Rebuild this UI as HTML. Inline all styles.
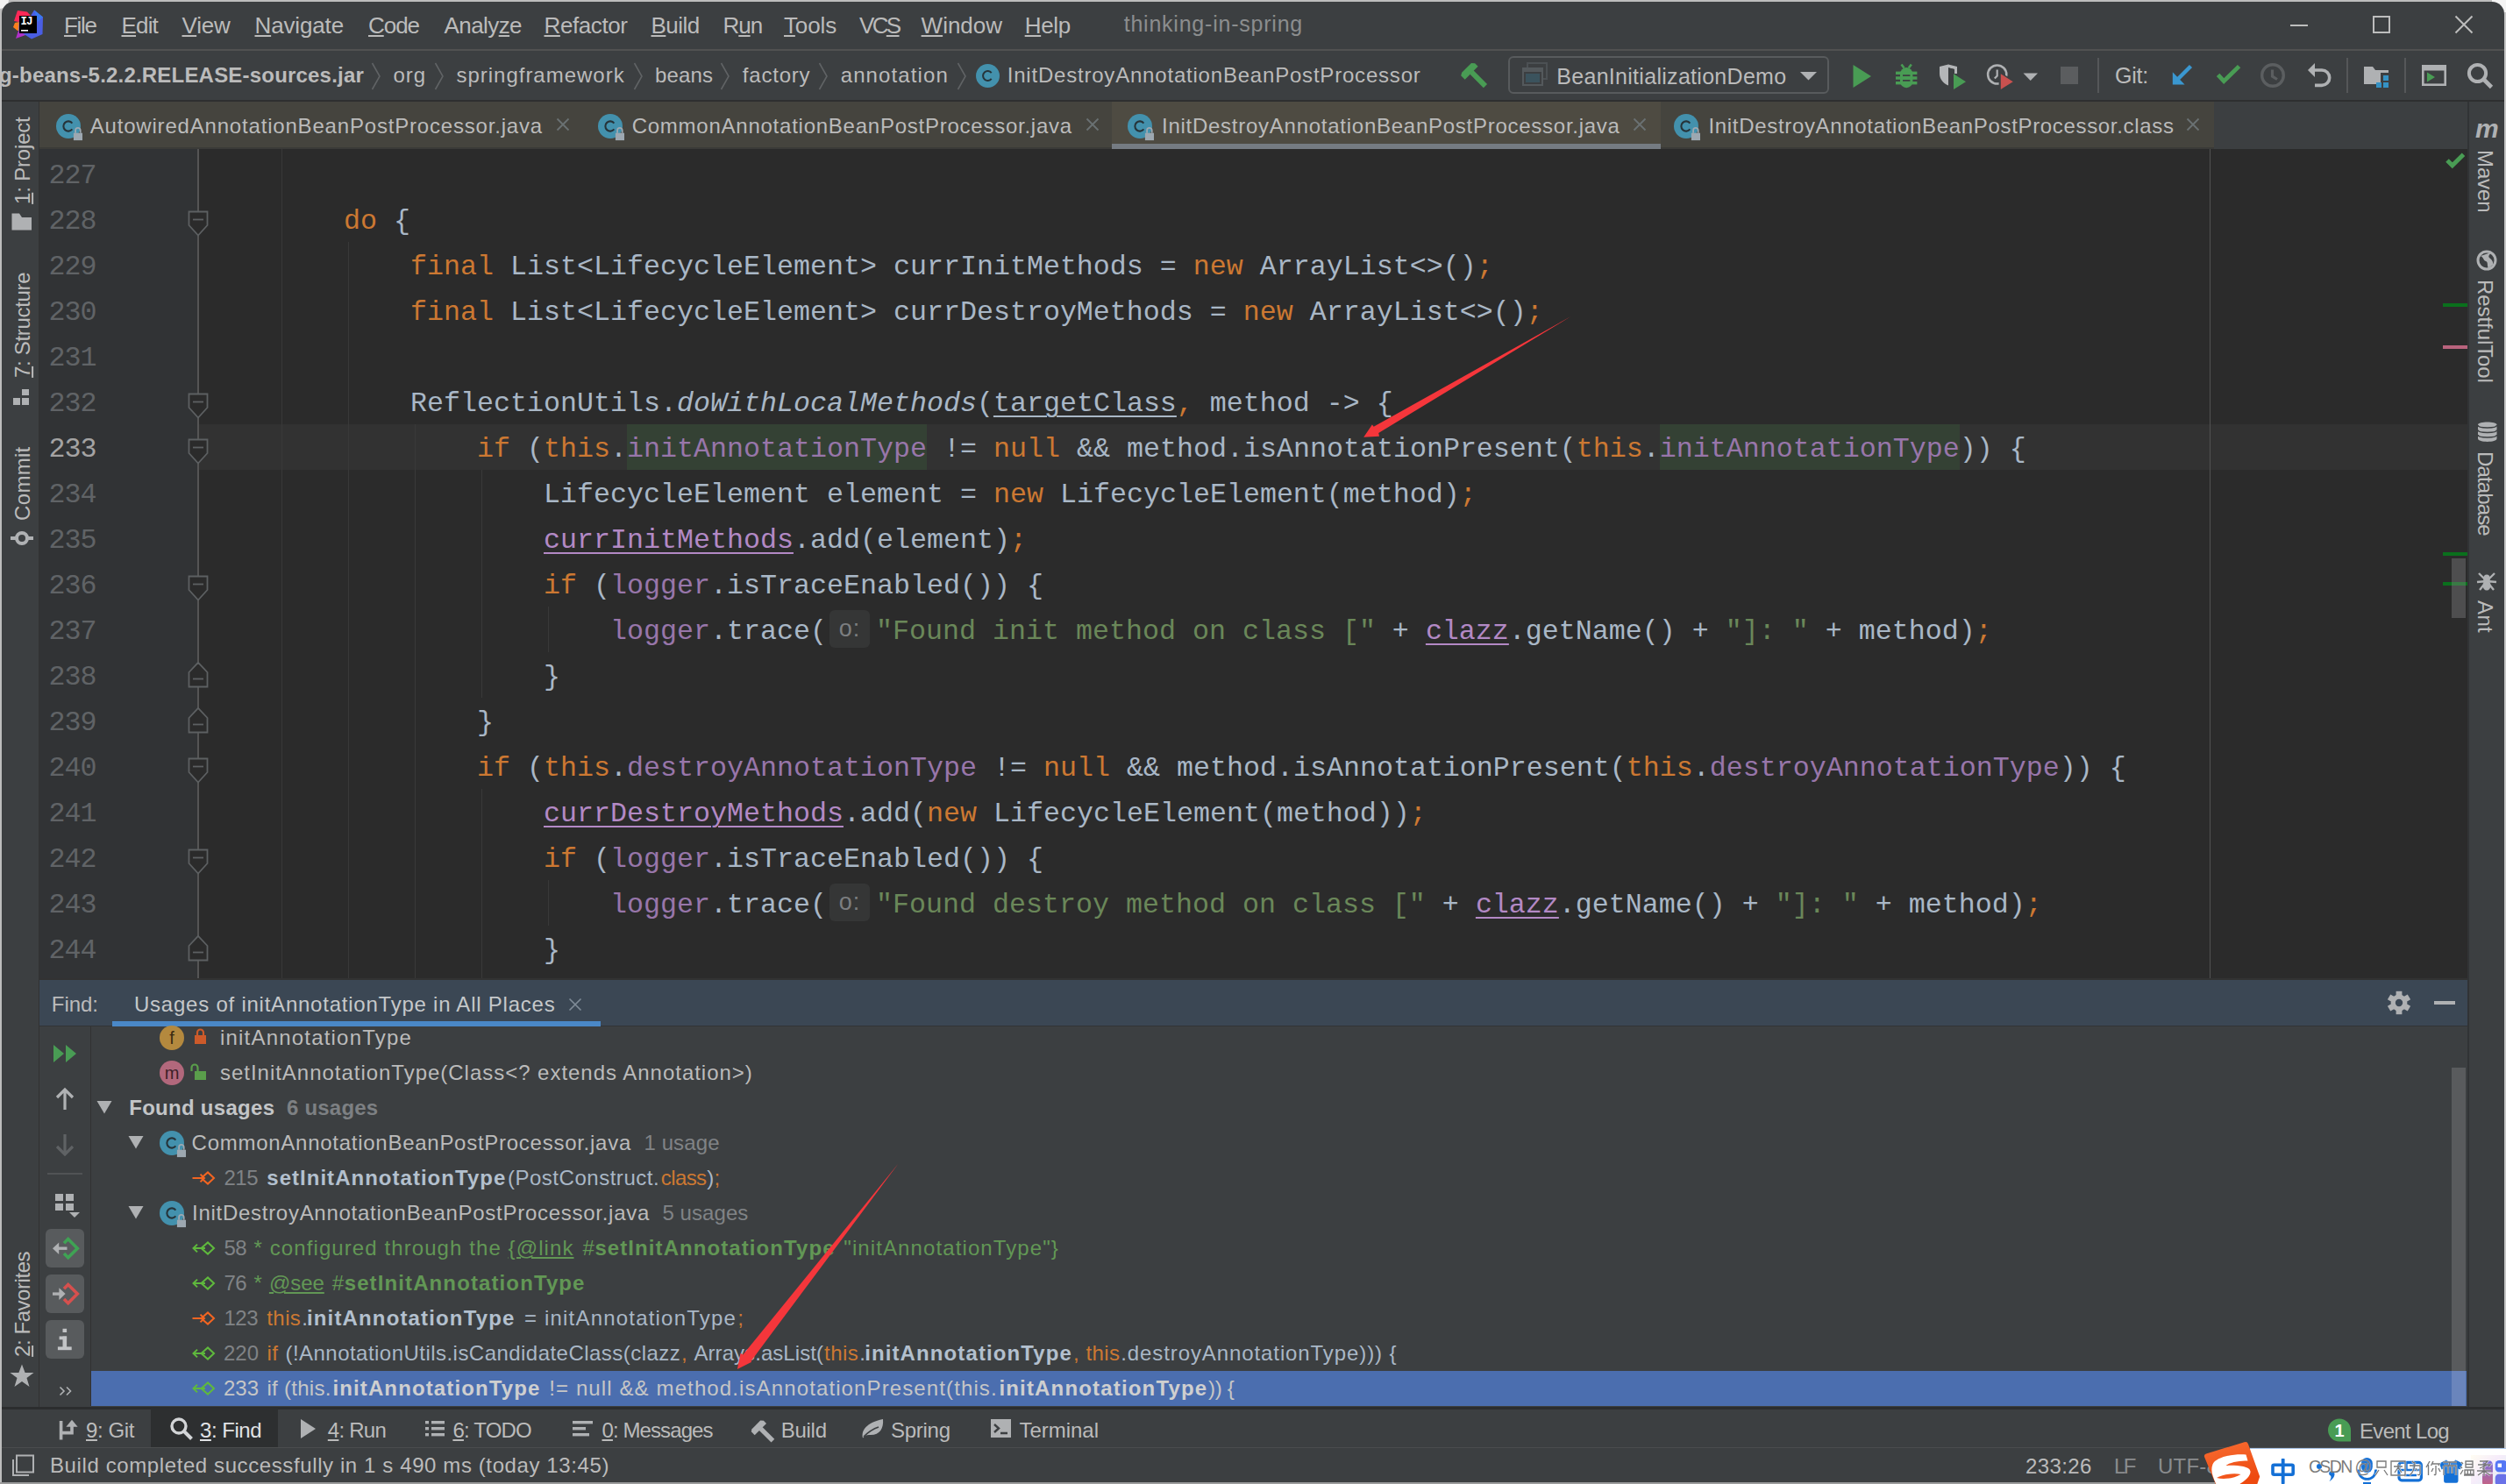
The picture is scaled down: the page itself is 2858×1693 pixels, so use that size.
<!DOCTYPE html>
<html><head><meta charset="utf-8"><title>IDE</title><style>
html,body{margin:0;padding:0}
body{width:2858px;height:1693px;overflow:hidden;position:relative;background:#f0f0f0;font-family:"Liberation Sans",sans-serif}
#w div,#w span.t,#w svg{position:absolute}
#w{position:absolute;left:0;top:0;width:2858px;height:1693px;overflow:hidden}
span.t{white-space:pre;display:block}
u{text-decoration:underline;text-underline-offset:2px;text-decoration-thickness:2px}
</style></head><body><div id="w">
<div style="left:0;top:0;width:2858px;height:1693px;background:#bdbdbd"></div>
<div style="left:2856px;top:0;width:2px;height:1693px;background:#c6c6c6"></div><div style="left:0;top:0;width:10px;height:10px;background:#f2f2f2;border-radius:0 0 10px 0"></div><div style="left:2842px;top:0;width:16px;height:14px;background:#f4f4f4;border-radius:0 0 0 12px"></div>
<div style="left:2px;top:2px;width:2854px;height:1689px;background:#3c3f41;border-radius:14px 14px 0 9px"></div>
<div style="left:2px;top:56px;width:2854px;height:2px;background:#515151;"></div>
<svg style="left:15px;top:11px" width="34" height="34" viewBox="0 0 34 34">
<polygon points="5,1 16,2.5 20,7 20,8 6,14 1,13" fill="#fe2857"/>
<polygon points="2,15 7,14 7,24 5,24 0,20" fill="#fc801d"/>
<polygon points="24,0.5 34,8.5 33.5,28 21,33.5 14,29 6,29 7,8 20,7" fill="#4a5ee4"/>
<polygon points="24,0.5 34,8.5 28,14" fill="#3a78f0"/>
<polygon points="6,24 14,29 3,33" fill="#b030c8"/>
<rect x="7" y="7" width="20" height="20" fill="#000"/>
<rect x="9" y="23" width="8" height="1.6" fill="#fff"/>
<text x="8.6" y="17.4" font-family="Liberation Mono" font-weight="bold" font-size="12.5" fill="#fff" letter-spacing="-1">IJ</text>
</svg>
<span class="t" style="left:73px;top:15.99px;font:26px/26px 'Liberation Sans',sans-serif;color:#bbbbbb;letter-spacing:-1.327px;"><u>F</u>ile</span>
<span class="t" style="left:138.5px;top:15.99px;font:26px/26px 'Liberation Sans',sans-serif;color:#bbbbbb;letter-spacing:-0.828px;"><u>E</u>dit</span>
<span class="t" style="left:207.5px;top:15.99px;font:26px/26px 'Liberation Sans',sans-serif;color:#bbbbbb;letter-spacing:-0.223px;"><u>V</u>iew</span>
<span class="t" style="left:290.5px;top:15.99px;font:26px/26px 'Liberation Sans',sans-serif;color:#bbbbbb;letter-spacing:-0.141px;"><u>N</u>avigate</span>
<span class="t" style="left:420px;top:15.99px;font:26px/26px 'Liberation Sans',sans-serif;color:#bbbbbb;letter-spacing:-1.043px;"><u>C</u>ode</span>
<span class="t" style="left:506.5px;top:15.99px;font:26px/26px 'Liberation Sans',sans-serif;color:#bbbbbb;letter-spacing:-0.574px;">Analy<u>z</u>e</span>
<span class="t" style="left:620.5px;top:15.99px;font:26px/26px 'Liberation Sans',sans-serif;color:#bbbbbb;letter-spacing:-0.410px;"><u>R</u>efactor</span>
<span class="t" style="left:742.5px;top:15.99px;font:26px/26px 'Liberation Sans',sans-serif;color:#bbbbbb;letter-spacing:-0.506px;"><u>B</u>uild</span>
<span class="t" style="left:824.6px;top:15.99px;font:26px/26px 'Liberation Sans',sans-serif;color:#bbbbbb;letter-spacing:-1.106px;">R<u>u</u>n</span>
<span class="t" style="left:894px;top:15.99px;font:26px/26px 'Liberation Sans',sans-serif;color:#bbbbbb;letter-spacing:-0.141px;"><u>T</u>ools</span>
<span class="t" style="left:980px;top:15.99px;font:26px/26px 'Liberation Sans',sans-serif;color:#bbbbbb;letter-spacing:-2.656px;">VC<u>S</u></span>
<span class="t" style="left:1050.6px;top:15.99px;font:26px/26px 'Liberation Sans',sans-serif;color:#bbbbbb;letter-spacing:-0.014px;"><u>W</u>indow</span>
<span class="t" style="left:1168.7px;top:15.99px;font:26px/26px 'Liberation Sans',sans-serif;color:#bbbbbb;letter-spacing:-0.296px;"><u>H</u>elp</span>
<span class="t" style="left:1281.7px;top:15.34px;font:25px/25px 'Liberation Sans',sans-serif;color:#8b8d8e;letter-spacing:0.774px;">thinking-in-spring</span>
<div style="left:2612px;top:28px;width:20px;height:2px;background:#bdbdbd;"></div>
<div style="left:2706px;top:18px;width:16px;height:16px;border:2px solid #bdbdbd"></div>
<svg style="left:2799px;top:17px" width="22" height="22"><path d="M1.5 1.5L20.5 20.5M20.5 1.5L1.5 20.5" stroke="#bdbdbd" stroke-width="2" fill="none"/></svg>
<div style="left:2px;top:114px;width:2854px;height:2px;background:#2e2f30;"></div>
<span class="t" style="left:-1px;top:73.68px;font:bold 24px/24px 'Liberation Sans',sans-serif;color:#bbbbbb;letter-spacing:0.197px;">g-beans-5.2.2.RELEASE-sources.jar</span>
<span class="t" style="left:448.5px;top:73.68px;font:24px/24px 'Liberation Sans',sans-serif;color:#bbbbbb;letter-spacing:0.938px;">org</span>
<span class="t" style="left:520.4px;top:73.68px;font:24px/24px 'Liberation Sans',sans-serif;color:#bbbbbb;letter-spacing:0.994px;">springframework</span>
<span class="t" style="left:747px;top:73.68px;font:24px/24px 'Liberation Sans',sans-serif;color:#bbbbbb;letter-spacing:0.122px;">beans</span>
<span class="t" style="left:846.8px;top:73.68px;font:24px/24px 'Liberation Sans',sans-serif;color:#bbbbbb;letter-spacing:0.796px;">factory</span>
<span class="t" style="left:958.7px;top:73.68px;font:24px/24px 'Liberation Sans',sans-serif;color:#bbbbbb;letter-spacing:1.119px;">annotation</span>
<svg style="left:423px;top:71px" width="12" height="32"><path d="M1.5 1L10 16L1.5 31" stroke="#606365" stroke-width="1.6" fill="none"/></svg>
<svg style="left:495px;top:71px" width="12" height="32"><path d="M1.5 1L10 16L1.5 31" stroke="#606365" stroke-width="1.6" fill="none"/></svg>
<svg style="left:721.6px;top:71px" width="12" height="32"><path d="M1.5 1L10 16L1.5 31" stroke="#606365" stroke-width="1.6" fill="none"/></svg>
<svg style="left:821.4px;top:71px" width="12" height="32"><path d="M1.5 1L10 16L1.5 31" stroke="#606365" stroke-width="1.6" fill="none"/></svg>
<svg style="left:933.3px;top:71px" width="12" height="32"><path d="M1.5 1L10 16L1.5 31" stroke="#606365" stroke-width="1.6" fill="none"/></svg>
<svg style="left:1090.8px;top:71px" width="12" height="32"><path d="M1.5 1L10 16L1.5 31" stroke="#606365" stroke-width="1.6" fill="none"/></svg>
<svg style="left:1111.5px;top:71.5px" width="35" height="35"><circle cx="14.5" cy="14.5" r="13.5" fill="#4391ad"/><path d="M18.71 11.15 A5.40 5.40 0 1 0 18.71 17.85" stroke="#26343a" stroke-width="2.02" fill="none"/></svg>
<span class="t" style="left:1148.7px;top:73.68px;font:24px/24px 'Liberation Sans',sans-serif;color:#bbbbbb;letter-spacing:0.798px;">InitDestroyAnnotationBeanPostProcessor</span>
<svg style="left:1662.1px;top:67.9px" width="36" height="36" viewBox="-16 -14 40 40"><g transform="rotate(-45)" fill="#499c54"><path d="M-12.5 -3.5 L-9 -5.5 H8 L11 -2 V3.5 H-12.5 Z"/><rect x="-3.2" y="3" width="6.6" height="24.5"/></g></svg>
<div style="left:1720px;top:64px;width:363px;height:41px;border:2px solid #585b5d;border-radius:6px;box-sizing:border-box;width:366px;height:43px"></div>
<svg style="left:1736px;top:71px" width="30" height="28" viewBox="0 0 30 28">
<rect x="6" y="1" width="22" height="18" fill="none" stroke="#4c5154" stroke-width="2"/>
<rect x="1" y="7" width="22" height="19" fill="#3c3f41" stroke="#54595c" stroke-width="2"/>
<rect x="1" y="7" width="22" height="4" fill="#54595c"/>
<rect x="4" y="13" width="16" height="10" fill="#3b535d"/></svg>
<span class="t" style="left:1775.3px;top:74.84px;font:25px/25px 'Liberation Sans',sans-serif;color:#bbbbbb;letter-spacing:0.291px;">BeanInitializationDemo</span>
<svg style="left:2052px;top:81px" width="22" height="12"><path d="M1 1H20L10.5 10.5Z" fill="#afb1b3"/></svg>
<svg style="left:2112px;top:73px" width="24" height="28"><path d="M1.5 1L22 14L1.5 27Z" fill="#499c54"/></svg>
<svg style="left:2160px;top:70px" width="30" height="32" viewBox="2160 70 30 32">
<path d="M2168.5 73.5L2171.5 77.5M2179.8 73.5L2176.8 77.5" stroke="#499c54" stroke-width="2.6" fill="none"/>
<g fill="#499c54"><rect x="2162" y="81.6" width="24.4" height="3.4"/><rect x="2162" y="87.3" width="24.4" height="3.4"/><rect x="2162" y="93" width="24.4" height="3.4"/>
<path d="M2167 84.5 A7.2 7.6 0 0 1 2181.4 84.5 V93 A7.2 7.2 0 0 1 2167 93 Z"/></g>
<path d="M2170 86.1H2178.4M2170 91.9H2178.4" stroke="#3c3f41" stroke-width="1.6"/></svg>
<svg style="left:2209px;top:72px" width="36" height="32" viewBox="2209 72 36 32">
<path d="M2212 76 L2222 73.5 L2232 76 V84 H2229 V79 L2222 77.2 V97.5 C2216 95 2212 90 2212 84 Z" fill="#b4b6b8"/>
<path d="M2222 77.2 L2229 79 V85 H2225.5 V96 L2222 97.5 Z" fill="#3c3f41"/>
<path d="M2228 84.3 L2242 93.2 L2228 102 Z" fill="#499c54"/></svg>
<svg style="left:2263px;top:71px" width="36" height="34" viewBox="2263 71 36 34">
<circle cx="2277.7" cy="85" r="10.6" fill="none" stroke="#afb1b3" stroke-width="2.5"/>
<path d="M2277.7 79.5V86.5L2274.8 89.6" stroke="#afb1b3" stroke-width="2.2" fill="none"/>
<path d="M2279.6 81.5 L2299 93.2 L2279.6 105 Z" fill="#3c3f41"/>
<path d="M2281.8 84.3 L2295.8 93.2 L2281.8 102 Z" fill="#c9514f"/></svg>
<svg style="left:2307px;top:83px" width="18" height="10"><path d="M0.5 0.5H17L8.7 9Z" fill="#afb1b3"/></svg>
<div style="left:2350px;top:76px;width:20px;height:20px;background:#5b5d5f;"></div>
<div style="left:2392px;top:66px;width:2px;height:40px;background:#555759;"></div>
<span class="t" style="left:2412px;top:73.84px;font:25px/25px 'Liberation Sans',sans-serif;color:#bbbbbb;letter-spacing:-0.227px;">Git:</span>
<svg style="left:2476px;top:72px" width="28" height="28" viewBox="2476 72 28 28">
<path d="M2498.5 75.5 L2484 90" stroke="#3a97d0" stroke-width="4.4" fill="none"/><path d="M2477.8 82.3 V96.4 H2491.6 Z" fill="#3a97d0"/></svg>
<svg style="left:2525px;top:72px" width="32" height="28" viewBox="2525 72 32 28"><path d="M2529.6 85.4 L2536.2 92.6 L2553.6 75.6" stroke="#499c54" stroke-width="4.8" fill="none"/></svg>
<svg style="left:2577px;top:71px" width="30" height="30" viewBox="0 0 30 30">
<circle cx="15" cy="15" r="12.3" fill="none" stroke="#5b5e60" stroke-width="3.4"/><path d="M14.5 8.5V16L20 19.5" stroke="#5b5e60" stroke-width="3.2" fill="none"/></svg>
<svg style="left:2630px;top:70px" width="30" height="30" viewBox="0 0 30 30">
<path d="M2 10 L10 2 V18 Z" fill="#afb1b3"/><path d="M9 10 H18 A8.7 8.7 0 0 1 18 27.4 H10" stroke="#afb1b3" stroke-width="3.6" fill="none"/></svg>
<div style="left:2676px;top:66px;width:2px;height:40px;background:#555759;"></div>
<svg style="left:2695px;top:75px" width="30" height="26" viewBox="0 0 30 26">
<path d="M1 1 H11 L14 5 H29 V8 H20 V21 H1 Z" fill="#afb1b3"/>
<rect x="23" y="11" width="6" height="6" fill="#3592c4"/><rect x="15" y="19" width="6" height="6" fill="#3592c4"/><rect x="23" y="19" width="6" height="6" fill="#3592c4"/></svg>
<div style="left:2742px;top:66px;width:2px;height:40px;background:#555759;"></div>
<svg style="left:2761px;top:73px" width="30" height="26" viewBox="0 0 30 26">
<rect x="2.3" y="2.3" width="25.4" height="21.4" fill="none" stroke="#afb1b3" stroke-width="2.6"/><rect x="1" y="1" width="28" height="6.5" fill="#afb1b3"/>
<path d="M7 9.5 L16 15 L7 20.5 Z" fill="#499c54"/></svg>
<svg style="left:2812px;top:70px" width="32" height="32" viewBox="0 0 32 32">
<circle cx="13.5" cy="13.5" r="9.6" fill="none" stroke="#afb1b3" stroke-width="4"/><path d="M20.5 20.5 L29.5 29.5" stroke="#afb1b3" stroke-width="4.6"/></svg>
<div style="left:2px;top:116px;width:43px;height:1491px;background:#3c3f41;"></div>
<div style="left:44px;top:116px;width:1px;height:1491px;background:#323232;"></div>
<div style="left:29px;top:232.5px;width:0;height:0"><span class="t" style="left:0;top:-14.9px;font:24px/24px 'Liberation Sans',sans-serif;color:#bbbbbb;transform-origin:0 14.9px;transform:rotate(-90deg);letter-spacing:-0.190px"><u>1</u>: Project</span></div>
<svg style="left:13px;top:243px" width="24" height="20"><path d="M0.5 0.5H9L12 5H23V19.5H0.5Z" fill="#afb1b3"/></svg>
<div style="left:29px;top:431px;width:0;height:0"><span class="t" style="left:0;top:-14.9px;font:24px/24px 'Liberation Sans',sans-serif;color:#bbbbbb;transform-origin:0 14.9px;transform:rotate(-90deg);letter-spacing:-0.333px"><u>7</u>: Structure</span></div>
<svg style="left:15px;top:444px" width="20" height="19"><g fill="#afb1b3"><rect x="10" y="0" width="8" height="7"/><rect x="0" y="10" width="8" height="8"/><rect x="10" y="10" width="8" height="8"/></g></svg>
<div style="left:29px;top:593.5px;width:0;height:0"><span class="t" style="left:0;top:-14.9px;font:24px/24px 'Liberation Sans',sans-serif;color:#bbbbbb;transform-origin:0 14.9px;transform:rotate(-90deg);letter-spacing:0.300px">Commit</span></div>
<svg style="left:12px;top:603px" width="26" height="22"><circle cx="13" cy="11" r="6" stroke="#afb1b3" stroke-width="4" fill="none"/><path d="M0 11H7M19 11H26" stroke="#afb1b3" stroke-width="4"/></svg>
<div style="left:29px;top:1547.6px;width:0;height:0"><span class="t" style="left:0;top:-14.9px;font:24px/24px 'Liberation Sans',sans-serif;color:#bbbbbb;transform-origin:0 14.9px;transform:rotate(-90deg);letter-spacing:-0.450px"><u>2</u>: Favorites</span></div>
<svg style="left:11px;top:1556px" width="28" height="27"><path d="M14 0.5L17.6 10H27.5L19.5 16L22.5 26L14 20L5.5 26L8.5 16L0.5 10H10.4Z" fill="#afb1b3"/></svg>
<div style="left:2814px;top:116px;width:42px;height:1491px;background:#3c3f41;"></div>
<div style="left:2814px;top:116px;width:2px;height:1491px;background:#313335;"></div>
<span class="t" style="left:2823px;top:132px;font:italic bold 30px/30px 'Liberation Sans',sans-serif;color:#afb1b3">m</span>
<div style="left:2837px;top:171.4px;width:0;height:0"><span class="t" style="left:0;top:-9.1px;font:24px/24px 'Liberation Sans',sans-serif;color:#bbbbbb;transform-origin:0 9.1px;transform:rotate(90deg);letter-spacing:-0.160px">Maven</span></div>
<svg style="left:2824px;top:285px" width="24" height="24"><circle cx="12" cy="12" r="10" stroke="#afb1b3" stroke-width="3" fill="none"/><path d="M5 7C9 9 8 12 11 13C14 14 12 18 14 21L19 17C20 13 17 11 15 9C13 7 16 5 17 3" fill="#afb1b3"/></svg>
<div style="left:2837px;top:319.5px;width:0;height:0"><span class="t" style="left:0;top:-9.1px;font:24px/24px 'Liberation Sans',sans-serif;color:#bbbbbb;transform-origin:0 9.1px;transform:rotate(90deg);letter-spacing:-0.091px">RestfulTool</span></div>
<svg style="left:2825px;top:480px" width="24" height="26"><path d="M1 4.5C1 0.5 22.5 0.5 22.5 4.5V20.5C22.5 25 1 25 1 20.5Z" fill="#afb1b3"/><path d="M1 5C1 9 22.5 9 22.5 5M1 10.5C1 14.5 22.5 14.5 22.5 10.5M1 16C1 20 22.5 20 22.5 16" stroke="#3c3f41" stroke-width="1.5" fill="none"/></svg>
<div style="left:2837px;top:515px;width:0;height:0"><span class="t" style="left:0;top:-9.1px;font:24px/24px 'Liberation Sans',sans-serif;color:#bbbbbb;transform-origin:0 9.1px;transform:rotate(90deg);letter-spacing:-0.875px">Database</span></div>
<svg style="left:2824px;top:651px" width="24" height="24"><g stroke="#afb1b3" stroke-width="2.4" fill="none"><path d="M12 12L3 3M12 12L21 3M12 12L1 13M12 12L23 13M12 12L4 22M12 12L20 22"/></g><ellipse cx="12" cy="9" rx="4" ry="4.5" fill="#afb1b3"/><ellipse cx="12" cy="17" rx="4.5" ry="5.5" fill="#afb1b3"/></svg>
<div style="left:2837px;top:685px;width:0;height:0"><span class="t" style="left:0;top:-9.1px;font:24px/24px 'Liberation Sans',sans-serif;color:#bbbbbb;transform-origin:0 9.1px;transform:rotate(90deg);letter-spacing:0.333px">Ant</span></div>
<div style="left:45px;top:116px;width:2769px;height:54px;background:#3c3f41;"></div>
<div style="left:45px;top:116px;width:1223px;height:54px;background:#45443e;"></div>
<div style="left:1268px;top:116px;width:626px;height:54px;background:#4e4b42;"></div>
<div style="left:1894px;top:116px;width:631px;height:54px;background:#45443e;"></div>
<div style="left:45px;top:168px;width:1223px;height:2px;background:#3b3b38;"></div>
<div style="left:1894px;top:168px;width:631px;height:2px;background:#3b3b38;"></div>
<div style="left:1268px;top:164px;width:626px;height:6px;background:#757b82;"></div>
<svg style="left:62.7px;top:129.0px" width="36" height="36"><circle cx="15" cy="15" r="14" fill="#4391ad"/><path d="M19.37 11.53 A5.60 5.60 0 1 0 19.37 18.47" stroke="#26343a" stroke-width="2.10" fill="none"/><rect x="20.9" y="22.7" width="10.1" height="8.4" fill="#9da8b1"/><path d="M23.1 22.7 V19.6 A2.8 2.8 0 0 1 28.7 19.6 V22.7" stroke="#9da8b1" stroke-width="1.8" fill="none"/></svg>
<span class="t" style="left:102.7px;top:131.68px;font:24px/24px 'Liberation Sans',sans-serif;color:#bbbbbb;letter-spacing:0.813px;">AutowiredAnnotationBeanPostProcessor.java</span>
<svg style="left:634px;top:134px" width="16" height="16"><path d="M1.5 1.5L14.5 14.5M14.5 1.5L1.5 14.5" stroke="#6a7173" stroke-width="1.8" fill="none"/></svg>
<svg style="left:680.7px;top:129.0px" width="36" height="36"><circle cx="15" cy="15" r="14" fill="#4391ad"/><path d="M19.37 11.53 A5.60 5.60 0 1 0 19.37 18.47" stroke="#26343a" stroke-width="2.10" fill="none"/><rect x="20.9" y="22.7" width="10.1" height="8.4" fill="#9da8b1"/><path d="M23.1 22.7 V19.6 A2.8 2.8 0 0 1 28.7 19.6 V22.7" stroke="#9da8b1" stroke-width="1.8" fill="none"/></svg>
<span class="t" style="left:720.7px;top:131.68px;font:24px/24px 'Liberation Sans',sans-serif;color:#bbbbbb;letter-spacing:0.752px;">CommonAnnotationBeanPostProcessor.java</span>
<svg style="left:1237.7px;top:134px" width="16" height="16"><path d="M1.5 1.5L14.5 14.5M14.5 1.5L1.5 14.5" stroke="#6a7173" stroke-width="1.8" fill="none"/></svg>
<svg style="left:1284.7px;top:129.0px" width="36" height="36"><circle cx="15" cy="15" r="14" fill="#4391ad"/><path d="M19.37 11.53 A5.60 5.60 0 1 0 19.37 18.47" stroke="#26343a" stroke-width="2.10" fill="none"/><rect x="20.9" y="22.7" width="10.1" height="8.4" fill="#9da8b1"/><path d="M23.1 22.7 V19.6 A2.8 2.8 0 0 1 28.7 19.6 V22.7" stroke="#9da8b1" stroke-width="1.8" fill="none"/></svg>
<span class="t" style="left:1325px;top:131.68px;font:24px/24px 'Liberation Sans',sans-serif;color:#bbbbbb;letter-spacing:0.738px;">InitDestroyAnnotationBeanPostProcessor.java</span>
<svg style="left:1862px;top:134px" width="16" height="16"><path d="M1.5 1.5L14.5 14.5M14.5 1.5L1.5 14.5" stroke="#6a7173" stroke-width="1.8" fill="none"/></svg>
<svg style="left:1908.1px;top:129.0px" width="36" height="36"><circle cx="15" cy="15" r="14" fill="#4391ad"/><path d="M19.37 11.53 A5.60 5.60 0 1 0 19.37 18.47" stroke="#26343a" stroke-width="2.10" fill="none"/><rect x="20.9" y="22.7" width="10.1" height="8.4" fill="#9da8b1"/><path d="M23.1 22.7 V19.6 A2.8 2.8 0 0 1 28.7 19.6 V22.7" stroke="#9da8b1" stroke-width="1.8" fill="none"/></svg>
<span class="t" style="left:1948.5px;top:131.68px;font:24px/24px 'Liberation Sans',sans-serif;color:#bbbbbb;letter-spacing:0.670px;">InitDestroyAnnotationBeanPostProcessor.class</span>
<svg style="left:2493px;top:134px" width="16" height="16"><path d="M1.5 1.5L14.5 14.5M14.5 1.5L1.5 14.5" stroke="#6a7173" stroke-width="1.8" fill="none"/></svg>
<div style="left:45px;top:170px;width:181px;height:946px;background:#313335;"></div>
<div style="left:226px;top:170px;width:2588px;height:946px;background:#2b2b2b;"></div>
<div style="left:226px;top:484px;width:2588px;height:52px;background:#323232;"></div>
<div style="left:715px;top:484px;width:342px;height:52px;background:#344134;"></div>
<div style="left:1893px;top:484px;width:342px;height:52px;background:#344134;"></div>
<div style="left:321px;top:170px;width:1px;height:946px;background:#393939;"></div>
<div style="left:397px;top:276px;width:1px;height:840px;background:#393939;"></div>
<div style="left:473px;top:484px;width:1px;height:632px;background:#393939;"></div>
<div style="left:549px;top:536px;width:1px;height:260px;background:#393939;"></div>
<div style="left:549px;top:900px;width:1px;height:216px;background:#393939;"></div>
<div style="left:625px;top:692px;width:1px;height:52px;background:#393939;"></div>
<div style="left:625px;top:1004px;width:1px;height:52px;background:#393939;"></div>
<div style="left:2520px;top:170px;width:1px;height:946px;background:#525252;"></div>
<div style="left:225px;top:170px;width:2px;height:946px;background:#555555;"></div>
<span class="t" style="left:55.5px;top:175.3px;font:31.662px/52px 'Liberation Mono',monospace;color:#606366;letter-spacing:-1px">227</span>
<span class="t" style="left:55.5px;top:227.3px;font:31.662px/52px 'Liberation Mono',monospace;color:#606366;letter-spacing:-1px">228</span>
<span class="t" style="left:55.5px;top:279.3px;font:31.662px/52px 'Liberation Mono',monospace;color:#606366;letter-spacing:-1px">229</span>
<span class="t" style="left:55.5px;top:331.3px;font:31.662px/52px 'Liberation Mono',monospace;color:#606366;letter-spacing:-1px">230</span>
<span class="t" style="left:55.5px;top:383.3px;font:31.662px/52px 'Liberation Mono',monospace;color:#606366;letter-spacing:-1px">231</span>
<span class="t" style="left:55.5px;top:435.3px;font:31.662px/52px 'Liberation Mono',monospace;color:#606366;letter-spacing:-1px">232</span>
<span class="t" style="left:55.5px;top:487.3px;font:31.662px/52px 'Liberation Mono',monospace;color:#a4a3a3;letter-spacing:-1px">233</span>
<span class="t" style="left:55.5px;top:539.3px;font:31.662px/52px 'Liberation Mono',monospace;color:#606366;letter-spacing:-1px">234</span>
<span class="t" style="left:55.5px;top:591.3px;font:31.662px/52px 'Liberation Mono',monospace;color:#606366;letter-spacing:-1px">235</span>
<span class="t" style="left:55.5px;top:643.3px;font:31.662px/52px 'Liberation Mono',monospace;color:#606366;letter-spacing:-1px">236</span>
<span class="t" style="left:55.5px;top:695.3px;font:31.662px/52px 'Liberation Mono',monospace;color:#606366;letter-spacing:-1px">237</span>
<span class="t" style="left:55.5px;top:747.3px;font:31.662px/52px 'Liberation Mono',monospace;color:#606366;letter-spacing:-1px">238</span>
<span class="t" style="left:55.5px;top:799.3px;font:31.662px/52px 'Liberation Mono',monospace;color:#606366;letter-spacing:-1px">239</span>
<span class="t" style="left:55.5px;top:851.3px;font:31.662px/52px 'Liberation Mono',monospace;color:#606366;letter-spacing:-1px">240</span>
<span class="t" style="left:55.5px;top:903.3px;font:31.662px/52px 'Liberation Mono',monospace;color:#606366;letter-spacing:-1px">241</span>
<span class="t" style="left:55.5px;top:955.3px;font:31.662px/52px 'Liberation Mono',monospace;color:#606366;letter-spacing:-1px">242</span>
<span class="t" style="left:55.5px;top:1007.3px;font:31.662px/52px 'Liberation Mono',monospace;color:#606366;letter-spacing:-1px">243</span>
<span class="t" style="left:55.5px;top:1059.3px;font:31.662px/52px 'Liberation Mono',monospace;color:#606366;letter-spacing:-1px">244</span>
<span class="t" style="left:392px;top:227.3px;font:31.662px/52px 'Liberation Mono',monospace;color:#a9b7c6;height:52px"><span style="color:#cc7832">do</span> {</span>
<span class="t" style="left:468px;top:279.3px;font:31.662px/52px 'Liberation Mono',monospace;color:#a9b7c6;height:52px"><span style="color:#cc7832">final</span> List&lt;LifecycleElement&gt; currInitMethods = <span style="color:#cc7832">new</span> ArrayList&lt;&gt;()<span style="color:#cc7832">;</span></span>
<span class="t" style="left:468px;top:331.3px;font:31.662px/52px 'Liberation Mono',monospace;color:#a9b7c6;height:52px"><span style="color:#cc7832">final</span> List&lt;LifecycleElement&gt; currDestroyMethods = <span style="color:#cc7832">new</span> ArrayList&lt;&gt;()<span style="color:#cc7832">;</span></span>
<span class="t" style="left:468px;top:435.3px;font:31.662px/52px 'Liberation Mono',monospace;color:#a9b7c6;height:52px">ReflectionUtils.<span style="font-style:italic">doWithLocalMethods</span>(<span style="text-decoration:underline;text-decoration-thickness:2px;text-underline-offset:5px">targetClass</span><span style="color:#cc7832">,</span> method -&gt; {</span>
<span class="t" style="left:544px;top:487.3px;font:31.662px/52px 'Liberation Mono',monospace;color:#a9b7c6;height:52px"><span style="color:#cc7832">if</span> (<span style="color:#cc7832">this</span>.<span style="color:#9876aa">initAnnotationType</span> != <span style="color:#cc7832">null</span> &amp;&amp; method.isAnnotationPresent(<span style="color:#cc7832">this</span>.<span style="color:#9876aa">initAnnotationType</span>)) {</span>
<span class="t" style="left:620px;top:539.3px;font:31.662px/52px 'Liberation Mono',monospace;color:#a9b7c6;height:52px">LifecycleElement element = <span style="color:#cc7832">new</span> LifecycleElement(method)<span style="color:#cc7832">;</span></span>
<span class="t" style="left:620px;top:591.3px;font:31.662px/52px 'Liberation Mono',monospace;color:#a9b7c6;height:52px"><span style="color:#b389c5;text-decoration:underline;text-decoration-thickness:2px;text-underline-offset:5px">currInitMethods</span>.add(element)<span style="color:#cc7832">;</span></span>
<span class="t" style="left:620px;top:643.3px;font:31.662px/52px 'Liberation Mono',monospace;color:#a9b7c6;height:52px"><span style="color:#cc7832">if</span> (<span style="color:#9876aa">logger</span>.isTraceEnabled()) {</span>
<span class="t" style="left:696px;top:695.3px;font:31.662px/52px 'Liberation Mono',monospace;color:#a9b7c6;height:52px"><span style="color:#9876aa">logger</span>.trace(<span style="display:inline-block;width:56px;height:52px;vertical-align:top;position:relative"><span style="position:absolute;left:3px;top:1px;width:46px;height:43px;background:#353636;border-radius:6px;color:#7c7e80;font:27px/42px 'Liberation Sans',sans-serif;text-align:center;letter-spacing:1px">o:</span></span><span style="color:#6a8759">"Found init method on class ["</span> + <span style="color:#b389c5;text-decoration:underline;text-decoration-thickness:2px;text-underline-offset:5px">clazz</span>.getName() + <span style="color:#6a8759">"]: "</span> + method)<span style="color:#cc7832">;</span></span>
<span class="t" style="left:620px;top:747.3px;font:31.662px/52px 'Liberation Mono',monospace;color:#a9b7c6;height:52px">}</span>
<span class="t" style="left:544px;top:799.3px;font:31.662px/52px 'Liberation Mono',monospace;color:#a9b7c6;height:52px">}</span>
<span class="t" style="left:544px;top:851.3px;font:31.662px/52px 'Liberation Mono',monospace;color:#a9b7c6;height:52px"><span style="color:#cc7832">if</span> (<span style="color:#cc7832">this</span>.<span style="color:#9876aa">destroyAnnotationType</span> != <span style="color:#cc7832">null</span> &amp;&amp; method.isAnnotationPresent(<span style="color:#cc7832">this</span>.<span style="color:#9876aa">destroyAnnotationType</span>)) {</span>
<span class="t" style="left:620px;top:903.3px;font:31.662px/52px 'Liberation Mono',monospace;color:#a9b7c6;height:52px"><span style="color:#b389c5;text-decoration:underline;text-decoration-thickness:2px;text-underline-offset:5px">currDestroyMethods</span>.add(<span style="color:#cc7832">new</span> LifecycleElement(method))<span style="color:#cc7832">;</span></span>
<span class="t" style="left:620px;top:955.3px;font:31.662px/52px 'Liberation Mono',monospace;color:#a9b7c6;height:52px"><span style="color:#cc7832">if</span> (<span style="color:#9876aa">logger</span>.isTraceEnabled()) {</span>
<span class="t" style="left:696px;top:1007.3px;font:31.662px/52px 'Liberation Mono',monospace;color:#a9b7c6;height:52px"><span style="color:#9876aa">logger</span>.trace(<span style="display:inline-block;width:56px;height:52px;vertical-align:top;position:relative"><span style="position:absolute;left:3px;top:1px;width:46px;height:43px;background:#353636;border-radius:6px;color:#7c7e80;font:27px/42px 'Liberation Sans',sans-serif;text-align:center;letter-spacing:1px">o:</span></span><span style="color:#6a8759">"Found destroy method on class ["</span> + <span style="color:#b389c5;text-decoration:underline;text-decoration-thickness:2px;text-underline-offset:5px">clazz</span>.getName() + <span style="color:#6a8759">"]: "</span> + method)<span style="color:#cc7832">;</span></span>
<span class="t" style="left:620px;top:1059.3px;font:31.662px/52px 'Liberation Mono',monospace;color:#a9b7c6;height:52px">}</span>
<svg style="left:214px;top:240px" width="24" height="31"><path d="M1.5 1.5H22.5V17L12 28.5L1.5 17Z" fill="#2b2b2b" stroke="#5d6062" stroke-width="1.8"/><path d="M6 10.5H18" stroke="#5d6062" stroke-width="1.8"/></svg>
<svg style="left:214px;top:448px" width="24" height="31"><path d="M1.5 1.5H22.5V17L12 28.5L1.5 17Z" fill="#2b2b2b" stroke="#5d6062" stroke-width="1.8"/><path d="M6 10.5H18" stroke="#5d6062" stroke-width="1.8"/></svg>
<svg style="left:214px;top:500px" width="24" height="31"><path d="M1.5 1.5H22.5V17L12 28.5L1.5 17Z" fill="#2b2b2b" stroke="#5d6062" stroke-width="1.8"/><path d="M6 10.5H18" stroke="#5d6062" stroke-width="1.8"/></svg>
<svg style="left:214px;top:656px" width="24" height="31"><path d="M1.5 1.5H22.5V17L12 28.5L1.5 17Z" fill="#2b2b2b" stroke="#5d6062" stroke-width="1.8"/><path d="M6 10.5H18" stroke="#5d6062" stroke-width="1.8"/></svg>
<svg style="left:214px;top:864px" width="24" height="31"><path d="M1.5 1.5H22.5V17L12 28.5L1.5 17Z" fill="#2b2b2b" stroke="#5d6062" stroke-width="1.8"/><path d="M6 10.5H18" stroke="#5d6062" stroke-width="1.8"/></svg>
<svg style="left:214px;top:968px" width="24" height="31"><path d="M1.5 1.5H22.5V17L12 28.5L1.5 17Z" fill="#2b2b2b" stroke="#5d6062" stroke-width="1.8"/><path d="M6 10.5H18" stroke="#5d6062" stroke-width="1.8"/></svg>
<svg style="left:214px;top:754px" width="24" height="31"><path d="M1.5 29.5H22.5V13L12 1.8L1.5 13Z" fill="#2b2b2b" stroke="#5d6062" stroke-width="1.8"/><path d="M6 20.5H18" stroke="#5d6062" stroke-width="1.8"/></svg>
<svg style="left:214px;top:806px" width="24" height="31"><path d="M1.5 29.5H22.5V13L12 1.8L1.5 13Z" fill="#2b2b2b" stroke="#5d6062" stroke-width="1.8"/><path d="M6 20.5H18" stroke="#5d6062" stroke-width="1.8"/></svg>
<svg style="left:214px;top:1066px" width="24" height="31"><path d="M1.5 29.5H22.5V13L12 1.8L1.5 13Z" fill="#2b2b2b" stroke="#5d6062" stroke-width="1.8"/><path d="M6 20.5H18" stroke="#5d6062" stroke-width="1.8"/></svg>
<svg style="left:2788px;top:173px" width="26" height="20"><path d="M3 10L8.8 15.8L21.5 3.2" stroke="#499c54" stroke-width="5" fill="none"/></svg>
<div style="left:2786px;top:346px;width:28px;height:4px;background:#0a701c;"></div>
<div style="left:2786px;top:394px;width:28px;height:4px;background:#b9637d;"></div>
<div style="left:2786px;top:630px;width:28px;height:4px;background:#0a701c;"></div>
<div style="left:2786px;top:664px;width:28px;height:4px;background:#0a701c;"></div>
<div style="left:2796px;top:637px;width:16px;height:68px;background:rgba(140,142,144,0.36)"></div>
<div style="left:45px;top:1116px;width:2769px;height:2px;background:#323232;"></div>
<svg style="left:1540px;top:350px" width="270" height="160" viewBox="1540 350 270 160">
<path d="M1791.1 361.2 L1566.7 486.8 L1564.9 484.4 L1555.2 498.7 L1573 497.7 L1572.2 494.1 Z" fill="#f5363b"/></svg>
<div style="left:45px;top:1118px;width:2769px;height:52px;background:#3b4754;"></div>
<div style="left:45px;top:1170px;width:2769px;height:2px;background:#313436;"></div>
<span class="t" style="left:58.8px;top:1133.68px;font:24px/24px 'Liberation Sans',sans-serif;color:#bbbbbb;letter-spacing:-0.072px;">Find:</span>
<span class="t" style="left:153px;top:1133.68px;font:24px/24px 'Liberation Sans',sans-serif;color:#c5c8ca;letter-spacing:0.765px;">Usages of initAnnotationType in All Places</span>
<svg style="left:648px;top:1138px" width="16" height="16"><path d="M1.5 1.5L14.5 14.5M14.5 1.5L1.5 14.5" stroke="#7f8b97" stroke-width="1.7" fill="none"/></svg>
<div style="left:128px;top:1165px;width:557px;height:6px;background:#4a88c7;"></div>
<svg style="left:2722px;top:1130px" width="28" height="28" viewBox="-14 -14 28 28">
<g fill="#afb1b3"><circle r="9.4"/><rect x="-3.4" y="-13.2" width="6.8" height="7" transform="rotate(0)"/><rect x="-3.4" y="-13.2" width="6.8" height="7" transform="rotate(60)"/><rect x="-3.4" y="-13.2" width="6.8" height="7" transform="rotate(120)"/><rect x="-3.4" y="-13.2" width="6.8" height="7" transform="rotate(180)"/><rect x="-3.4" y="-13.2" width="6.8" height="7" transform="rotate(240)"/><rect x="-3.4" y="-13.2" width="6.8" height="7" transform="rotate(300)"/></g><circle r="4.2" fill="#3b4754"/></svg>
<div style="left:2776px;top:1142px;width:24px;height:4px;background:#afb1b3;"></div>
<div style="left:45px;top:1171px;width:2769px;height:433px;background:#3c3f41;"></div>
<div style="left:103px;top:1171px;width:1px;height:433px;background:#323232;"></div>
<div style="left:2796px;top:1218px;width:16px;height:386px;background:#595b5d"></div>
<div style="left:104px;top:1564px;width:2709px;height:40px;background:#4b6eaf;"></div>
<div style="left:2796px;top:1564px;width:16px;height:40px;background:#6a85bc"></div>
<svg style="left:60px;top:1190px" width="30" height="24"><path d="M1 2L13 12L1 22ZM15 2L27 12L15 22Z" fill="#499c54"/></svg>
<svg style="left:62px;top:1240px" width="24" height="28"><path d="M12 26V4M3 12L12 3L21 12" stroke="#afb1b3" stroke-width="3.2" fill="none"/></svg>
<svg style="left:62px;top:1292px" width="24" height="28"><path d="M12 2V24M3 16L12 25L21 16" stroke="#5f6264" stroke-width="3.2" fill="none"/></svg>
<div style="left:54px;top:1338px;width:40px;height:2px;background:#515355;"></div>
<svg style="left:62px;top:1361px" width="30" height="30"><g fill="#afb1b3"><rect x="1" y="1" width="9" height="8"/><rect x="13" y="1" width="9" height="8"/><rect x="1" y="12" width="9" height="8"/><rect x="13" y="12" width="9" height="8"/><path d="M17 22H29L23 28Z"/></g></svg>
<div style="left:52px;top:1402px;width:44px;height:44px;background:#585b5d;border-radius:6px"></div>
<div style="left:52px;top:1454px;width:44px;height:44px;background:#585b5d;border-radius:6px"></div>
<div style="left:52px;top:1506px;width:44px;height:44px;background:#585b5d;border-radius:6px"></div>
<svg style="left:56px;top:1408px" width="36" height="32" viewBox="56 1408 36 32">
<path d="M73 1418.3 L77.7 1413.6 L88.3 1424.2 L77.7 1434.8 L73 1430.1" stroke="#3fa354" stroke-width="3.6" fill="none"/>
<path d="M66 1424.2H76.5" stroke="#afb1b3" stroke-width="3.4"/><path d="M60 1424.2L67.2 1417.4V1431Z" fill="#afb1b3"/></svg>
<svg style="left:56px;top:1460px" width="36" height="32" viewBox="56 1460 36 32">
<path d="M73 1470.2 L77.7 1465.5 L88.3 1476.1 L77.7 1486.7 L73 1482" stroke="#d6504e" stroke-width="3.6" fill="none"/>
<path d="M60 1476.1H68.5" stroke="#afb1b3" stroke-width="3.4"/><path d="M74.6 1476.1L67.4 1469.3V1482.9Z" fill="#afb1b3"/></svg>
<svg style="left:62px;top:1512px" width="24" height="32" viewBox="62 1512 24 32"><g fill="#c2c4c6">
<rect x="71.5" y="1515.8" width="4.6" height="4.2"/><rect x="67.6" y="1524.5" width="8.5" height="3.8"/><rect x="71.5" y="1524.5" width="4.6" height="13"/><rect x="65.9" y="1536.4" width="15.8" height="3.8"/></g></svg>
<svg style="left:66px;top:1580px" width="18" height="14"><path d="M2.5 2.5L7 7L2.5 11.5M10 2.5L14.5 7L10 11.5" stroke="#afb1b3" stroke-width="1.6" fill="none"/></svg>
<svg style="left:180.8px;top:1168.5px" width="30" height="30"><circle cx="15" cy="15" r="14" fill="#b4893e"/><text x="15" y="21.5" text-anchor="middle" font-family="Liberation Sans" font-size="20" fill="#3a2b12">f</text></svg>
<svg style="left:221px;top:1173px" width="16" height="20"><rect x="1" y="8" width="13" height="10" fill="#cc5a2a"/><path d="M4 8V5A3.5 3.5 0 0 1 11 5V8" stroke="#cc5a2a" stroke-width="2.2" fill="none"/></svg>
<span class="t" style="left:251px;top:1172.18px;font:24px/24px 'Liberation Sans',sans-serif;color:#bbbbbb;letter-spacing:1.195px;">initAnnotationType</span>
<svg style="left:180.8px;top:1209.0px" width="30" height="30"><circle cx="15" cy="15" r="14" fill="#b2687c"/><text x="15" y="21.5" text-anchor="middle" font-family="Liberation Sans" font-size="20" fill="#3d1f28">m</text></svg>
<svg style="left:217px;top:1212px" width="20" height="22"><rect x="5" y="10" width="13" height="10" fill="#5a9e4b"/><path d="M1.5 10V6A3.5 3.5 0 0 1 8.5 6V10" stroke="#5a9e4b" stroke-width="2.2" fill="none"/></svg>
<span class="t" style="left:251px;top:1212.18px;font:24px/24px 'Liberation Sans',sans-serif;color:#bbbbbb;letter-spacing:0.975px;">setInitAnnotationType(Class&lt;? extends Annotation&gt;)</span>
<svg style="left:109.7px;top:1255px" width="18" height="16"><path d="M0.5 1H17.5L9 15.5Z" fill="#afb1b3"/></svg>
<span class="t" style="left:147.2px;top:1252.18px;font:bold 24px/24px 'Liberation Sans',sans-serif;color:#c3c5c7;letter-spacing:0.284px;">Found usages</span>
<span class="t" style="left:327px;top:1252.18px;font:bold 24px/24px 'Liberation Sans',sans-serif;color:#7d8083;letter-spacing:0.208px;">6 usages</span>
<svg style="left:146px;top:1295px" width="18" height="16"><path d="M0.5 1H17.5L9 15.5Z" fill="#afb1b3"/></svg>
<svg style="left:180.8px;top:1288.5px" width="36" height="36"><circle cx="15" cy="15" r="14" fill="#4391ad"/><path d="M19.37 11.53 A5.60 5.60 0 1 0 19.37 18.47" stroke="#26343a" stroke-width="2.10" fill="none"/><rect x="20.9" y="22.7" width="10.1" height="8.4" fill="#9da8b1"/><path d="M23.1 22.7 V19.6 A2.8 2.8 0 0 1 28.7 19.6 V22.7" stroke="#9da8b1" stroke-width="1.8" fill="none"/></svg>
<span class="t" style="left:218.6px;top:1292.18px;font:24px/24px 'Liberation Sans',sans-serif;color:#bbbbbb;letter-spacing:0.731px;">CommonAnnotationBeanPostProcessor.java</span>
<span class="t" style="left:734.4px;top:1292.18px;font:24px/24px 'Liberation Sans',sans-serif;color:#808386;letter-spacing:0.113px;">1 usage</span>
<svg style="left:219px;top:1336px" width="27" height="16"><path d="M10.5 8L18 1.4L25 8L18 14.6Z" stroke="#f26522" stroke-width="2" fill="none"/><path d="M0.5 8H14M9.5 3.6L14 8L9.5 12.4" stroke="#f26522" stroke-width="2" fill="none"/></svg>
<span class="t" style="left:255.5px;top:1332.18px;font:24px/24px 'Liberation Sans',sans-serif;color:#808386;letter-spacing:-0.482px;">215</span>
<span class="t" style="left:304.3px;top:1332.18px;font:bold 24px/24px 'Liberation Sans',sans-serif;color:#b3c0ce;letter-spacing:1.022px;">setInitAnnotationType</span>
<span class="t" style="left:578.9px;top:1332.18px;font:24px/24px 'Liberation Sans',sans-serif;color:#a9b7c6;letter-spacing:0.527px;">(PostConstruct.</span>
<span class="t" style="left:753.8px;top:1332.18px;font:24px/24px 'Liberation Sans',sans-serif;color:#cc7832;letter-spacing:-0.597px;">class</span>
<span class="t" style="left:806.3px;top:1332.18px;font:24px/24px 'Liberation Sans',sans-serif;color:#a9b7c6;letter-spacing:-0.800px;">)</span>
<span class="t" style="left:814.5px;top:1332.18px;font:24px/24px 'Liberation Sans',sans-serif;color:#cc7832;letter-spacing:-1.272px;">;</span>
<svg style="left:146px;top:1375px" width="18" height="16"><path d="M0.5 1H17.5L9 15.5Z" fill="#afb1b3"/></svg>
<svg style="left:180.8px;top:1369.0px" width="36" height="36"><circle cx="15" cy="15" r="14" fill="#4391ad"/><path d="M19.37 11.53 A5.60 5.60 0 1 0 19.37 18.47" stroke="#26343a" stroke-width="2.10" fill="none"/><rect x="20.9" y="22.7" width="10.1" height="8.4" fill="#9da8b1"/><path d="M23.1 22.7 V19.6 A2.8 2.8 0 0 1 28.7 19.6 V22.7" stroke="#9da8b1" stroke-width="1.8" fill="none"/></svg>
<span class="t" style="left:219px;top:1372.18px;font:24px/24px 'Liberation Sans',sans-serif;color:#bbbbbb;letter-spacing:0.722px;">InitDestroyAnnotationBeanPostProcessor.java</span>
<span class="t" style="left:755.4px;top:1372.18px;font:24px/24px 'Liberation Sans',sans-serif;color:#808386;letter-spacing:0.074px;">5 usages</span>
<svg style="left:219px;top:1416px" width="27" height="16"><path d="M10.5 8L18 1.4L25 8L18 14.6Z" stroke="#5fb93d" stroke-width="2" fill="none"/><path d="M1.5 8H15M6 3.6L1.5 8L6 12.4" stroke="#5fb93d" stroke-width="2" fill="none"/></svg>
<span class="t" style="left:255.5px;top:1412.18px;font:24px/24px 'Liberation Sans',sans-serif;color:#808386;letter-spacing:-0.602px;">58</span>
<span class="t" style="left:289.6px;top:1412.18px;font:24px/24px 'Liberation Sans',sans-serif;color:#629755;letter-spacing:1.085px;">* configured through the <u style="text-decoration-thickness:1.5px">{@link</u></span>
<span class="t" style="left:664.4px;top:1412.18px;font:24px/24px 'Liberation Sans',sans-serif;color:#629755;letter-spacing:-0.559px;">#</span>
<span class="t" style="left:678.4px;top:1412.18px;font:bold 24px/24px 'Liberation Sans',sans-serif;color:#629755;letter-spacing:1.083px;">setInitAnnotationType</span>
<span class="t" style="left:962.3px;top:1412.18px;font:24px/24px 'Liberation Sans',sans-serif;color:#629755;letter-spacing:1.103px;">"initAnnotationType"}</span>
<svg style="left:219px;top:1456px" width="27" height="16"><path d="M10.5 8L18 1.4L25 8L18 14.6Z" stroke="#5fb93d" stroke-width="2" fill="none"/><path d="M1.5 8H15M6 3.6L1.5 8L6 12.4" stroke="#5fb93d" stroke-width="2" fill="none"/></svg>
<span class="t" style="left:255.5px;top:1452.18px;font:24px/24px 'Liberation Sans',sans-serif;color:#808386;letter-spacing:-0.602px;">76</span>
<span class="t" style="left:289.6px;top:1452.18px;font:24px/24px 'Liberation Sans',sans-serif;color:#629755;letter-spacing:-0.344px;">*</span>
<span class="t" style="left:306.9px;top:1452.18px;font:24px/24px 'Liberation Sans',sans-serif;color:#629755;letter-spacing:-0.041px;"><u style="text-decoration-thickness:1.5px">@see</u></span>
<span class="t" style="left:378.7px;top:1452.18px;font:24px/24px 'Liberation Sans',sans-serif;color:#629755;letter-spacing:-0.559px;">#</span>
<span class="t" style="left:392.7px;top:1452.18px;font:bold 24px/24px 'Liberation Sans',sans-serif;color:#629755;letter-spacing:1.112px;">setInitAnnotationType</span>
<svg style="left:219px;top:1496px" width="27" height="16"><path d="M10.5 8L18 1.4L25 8L18 14.6Z" stroke="#f26522" stroke-width="2" fill="none"/><path d="M0.5 8H14M9.5 3.6L14 8L9.5 12.4" stroke="#f26522" stroke-width="2" fill="none"/></svg>
<span class="t" style="left:255.5px;top:1492.18px;font:24px/24px 'Liberation Sans',sans-serif;color:#808386;letter-spacing:-0.482px;">123</span>
<span class="t" style="left:304.3px;top:1492.18px;font:24px/24px 'Liberation Sans',sans-serif;color:#cc7832;letter-spacing:0.410px;">this</span>
<span class="t" style="left:344.3px;top:1492.18px;font:24px/24px 'Liberation Sans',sans-serif;color:#a9b7c6;letter-spacing:-1.972px;">.</span>
<span class="t" style="left:350px;top:1492.18px;font:bold 24px/24px 'Liberation Sans',sans-serif;color:#b3c0ce;letter-spacing:1.147px;">initAnnotationType</span>
<span class="t" style="left:598px;top:1492.18px;font:24px/24px 'Liberation Sans',sans-serif;color:#a9b7c6;letter-spacing:-1.216px;">=</span>
<span class="t" style="left:621px;top:1492.18px;font:24px/24px 'Liberation Sans',sans-serif;color:#a9b7c6;letter-spacing:1.195px;">initAnnotationType</span>
<span class="t" style="left:841.3px;top:1492.18px;font:24px/24px 'Liberation Sans',sans-serif;color:#cc7832;letter-spacing:-1.572px;">;</span>
<svg style="left:219px;top:1536px" width="27" height="16"><path d="M10.5 8L18 1.4L25 8L18 14.6Z" stroke="#5fb93d" stroke-width="2" fill="none"/><path d="M1.5 8H15M6 3.6L1.5 8L6 12.4" stroke="#5fb93d" stroke-width="2" fill="none"/></svg>
<span class="t" style="left:254.9px;top:1532.18px;font:24px/24px 'Liberation Sans',sans-serif;color:#808386;letter-spacing:0.051px;">220</span>
<span class="t" style="left:304.4px;top:1532.18px;font:24px/24px 'Liberation Sans',sans-serif;color:#cc7832;letter-spacing:0.550px;">if</span>
<span class="t" style="left:325.5px;top:1532.18px;font:24px/24px 'Liberation Sans',sans-serif;color:#a9b7c6;letter-spacing:0.463px;">(!AnnotationUtils.isCandidateClass(clazz</span>
<span class="t" style="left:777px;top:1532.18px;font:24px/24px 'Liberation Sans',sans-serif;color:#cc7832;letter-spacing:-1.072px;">,</span>
<span class="t" style="left:791.5px;top:1532.18px;font:24px/24px 'Liberation Sans',sans-serif;color:#a9b7c6;letter-spacing:0.057px;">Arrays.asList(</span>
<span class="t" style="left:940px;top:1532.18px;font:24px/24px 'Liberation Sans',sans-serif;color:#cc7832;letter-spacing:0.460px;">this</span>
<span class="t" style="left:980.2px;top:1532.18px;font:24px/24px 'Liberation Sans',sans-serif;color:#a9b7c6;letter-spacing:-1.872px;">.</span>
<span class="t" style="left:986.2px;top:1532.18px;font:bold 24px/24px 'Liberation Sans',sans-serif;color:#b3c0ce;letter-spacing:1.108px;">initAnnotationType</span>
<span class="t" style="left:1224px;top:1532.18px;font:24px/24px 'Liberation Sans',sans-serif;color:#cc7832;letter-spacing:-1.872px;">,</span>
<span class="t" style="left:1238.4px;top:1532.18px;font:24px/24px 'Liberation Sans',sans-serif;color:#cc7832;letter-spacing:0.385px;">this</span>
<span class="t" style="left:1278.3px;top:1532.18px;font:24px/24px 'Liberation Sans',sans-serif;color:#a9b7c6;letter-spacing:0.899px;">.destroyAnnotationType))) {</span>
<svg style="left:219px;top:1576px" width="27" height="16"><path d="M10.5 8L18 1.4L25 8L18 14.6Z" stroke="#5fb93d" stroke-width="2" fill="none"/><path d="M1.5 8H15M6 3.6L1.5 8L6 12.4" stroke="#5fb93d" stroke-width="2" fill="none"/></svg>
<span class="t" style="left:254.9px;top:1572.18px;font:24px/24px 'Liberation Sans',sans-serif;color:#c6c6c6;letter-spacing:0.051px;">233</span>
<span class="t" style="left:304.4px;top:1572.18px;font:24px/24px 'Liberation Sans',sans-serif;color:#c6c6c6;letter-spacing:0.301px;">if (this.</span>
<span class="t" style="left:379.4px;top:1572.18px;font:bold 24px/24px 'Liberation Sans',sans-serif;color:#cfcfcf;letter-spacing:1.130px;">initAnnotationType</span>
<span class="t" style="left:626.2px;top:1572.18px;font:24px/24px 'Liberation Sans',sans-serif;color:#c6c6c6;letter-spacing:1.116px;">!= null &amp;&amp; method.isAnnotationPresent(this.</span>
<span class="t" style="left:1139.4px;top:1572.18px;font:bold 24px/24px 'Liberation Sans',sans-serif;color:#cfcfcf;letter-spacing:1.169px;">initAnnotationType</span>
<span class="t" style="left:1377.9px;top:1572.18px;font:24px/24px 'Liberation Sans',sans-serif;color:#c6c6c6;letter-spacing:-0.243px;">)) {</span>
<svg style="left:830px;top:1320px" width="200" height="250" viewBox="830 1320 200 250">
<path d="M1024.7 1327.3 L847.3 1545.6 L844.6 1543.8 L840.9 1562 L857.3 1553.8 L856.4 1552.9 Z" fill="#f5363b"/></svg>
<div style="left:2px;top:1607px;width:2854px;height:45px;background:#3c3f41;"></div>
<div style="left:2px;top:1605px;width:2854px;height:2.5px;background:#2b2d2e;"></div>
<div style="left:2px;top:1651px;width:2854px;height:1px;background:#4a4c4e;"></div>
<div style="left:172px;top:1607px;width:145px;height:44px;background:#2d2f30;"></div>
<svg style="left:66px;top:1616px" width="26" height="30" viewBox="66 1616 26 30"><path d="M69.6 1621V1642.6M69.6 1634.6H82V1626.5" stroke="#afb1b3" stroke-width="3.6" fill="none"/><path d="M75.4 1627.8L82 1619.8L88.6 1627.8Z" fill="#afb1b3"/></svg>
<span class="t" style="left:98px;top:1619.68px;font:24px/24px 'Liberation Sans',sans-serif;color:#bbbbbb;letter-spacing:-0.396px;"><u>9</u>: Git</span>
<svg style="left:193px;top:1616px" width="28" height="28"><circle cx="11" cy="11" r="8" stroke="#d3d5d7" stroke-width="3.4" fill="none"/><path d="M17 17L25.5 25.5" stroke="#d3d5d7" stroke-width="4"/></svg>
<span class="t" style="left:228px;top:1619.68px;font:24px/24px 'Liberation Sans',sans-serif;color:#e1e3e5;letter-spacing:-0.484px;"><u>3</u>: Find</span>
<svg style="left:342px;top:1618px" width="20" height="24"><path d="M1 1L18 12L1 23Z" fill="#afb1b3"/></svg>
<span class="t" style="left:373.8px;top:1619.68px;font:24px/24px 'Liberation Sans',sans-serif;color:#bbbbbb;letter-spacing:-0.756px;"><u>4</u>: Run</span>
<svg style="left:485px;top:1620px" width="24" height="20"><g fill="#afb1b3"><rect x="0" y="1" width="4" height="3.4"/><rect x="7" y="1" width="15" height="3.4"/><rect x="0" y="8" width="4" height="3.4"/><rect x="7" y="8" width="15" height="3.4"/><rect x="0" y="15" width="4" height="3.4"/><rect x="7" y="15" width="15" height="3.4"/></g></svg>
<span class="t" style="left:516.4px;top:1619.68px;font:24px/24px 'Liberation Sans',sans-serif;color:#bbbbbb;letter-spacing:-0.794px;"><u>6</u>: TODO</span>
<svg style="left:653px;top:1620px" width="24" height="20"><g fill="#afb1b3"><rect x="0" y="1" width="23" height="3.4"/><rect x="0" y="8" width="15" height="3.4"/><rect x="0" y="15" width="19" height="3.4"/></g></svg>
<span class="t" style="left:686.5px;top:1619.68px;font:24px/24px 'Liberation Sans',sans-serif;color:#bbbbbb;letter-spacing:-0.907px;"><u>0</u>: Messages</span>
<svg style="left:852.7px;top:1617.3px" width="32" height="32" viewBox="-16 -14 40 40"><g transform="rotate(-45)" fill="#afb1b3"><path d="M-12.5 -3.5 L-9 -5.5 H8 L11 -2 V3.5 H-12.5 Z"/><rect x="-3.2" y="3" width="6.6" height="24.5"/></g></svg>
<span class="t" style="left:890.8px;top:1619.68px;font:24px/24px 'Liberation Sans',sans-serif;color:#bbbbbb;letter-spacing:-0.295px;">Build</span>
<svg style="left:982px;top:1618px" width="28" height="24"><path d="M25 1C26 12 21 20 9 19C6 19 4 20 2 22.5C0 14 6 5 25 1Z" fill="#afb1b3"/><path d="M3 21C8 16 14 12 20 10" stroke="#3c3f41" stroke-width="1.6" fill="none"/></svg>
<span class="t" style="left:1016px;top:1619.68px;font:24px/24px 'Liberation Sans',sans-serif;color:#bbbbbb;letter-spacing:-0.279px;">Spring</span>
<svg style="left:1130px;top:1619px" width="24" height="22"><rect x="0" y="0" width="23" height="21" fill="#afb1b3"/><path d="M4 6L9 10.5L4 15M11 16H19" stroke="#3c3f41" stroke-width="2.4" fill="none"/></svg>
<span class="t" style="left:1162.4px;top:1619.68px;font:24px/24px 'Liberation Sans',sans-serif;color:#bbbbbb;letter-spacing:-0.013px;">Terminal</span>
<svg style="left:2655px;top:1618px" width="28" height="28"><path d="M13 0.5A13 13 0 1 0 13 26.5H26V13.5A13 13 0 0 0 13 0.5Z" fill="#499c54"/><text x="13" y="21" text-anchor="middle" font-family="Liberation Sans" font-weight="bold" font-size="20" fill="#fff">1</text></svg>
<span class="t" style="left:2691px;top:1620.68px;font:24px/24px 'Liberation Sans',sans-serif;color:#bbbbbb;letter-spacing:-0.677px;">Event Log</span>
<div style="left:2px;top:1652px;width:2854px;height:39px;background:#3c3f41;"></div>
<svg style="left:13px;top:1659px" width="28" height="26"><rect x="6" y="1.5" width="19" height="19" fill="none" stroke="#afb1b3" stroke-width="2"/><path d="M2 6V24H20" stroke="#afb1b3" stroke-width="2" fill="none"/></svg>
<span class="t" style="left:57px;top:1660.18px;font:24px/24px 'Liberation Sans',sans-serif;color:#bbbbbb;letter-spacing:0.602px;">Build completed successfully in 1 s 490 ms (today 13:45)</span>
<span class="t" style="left:2310px;top:1660.68px;font:24px/24px 'Liberation Sans',sans-serif;color:#bbbbbb;letter-spacing:0.366px;">233:26</span>
<span class="t" style="left:2411px;top:1660.68px;font:24px/24px 'Liberation Sans',sans-serif;color:#8a8c8e;letter-spacing:-2.508px;">LF</span>
<span class="t" style="left:2461px;top:1660.68px;font:24px/24px 'Liberation Sans',sans-serif;color:#8a8c8e;letter-spacing:0.200px;">UTF-8</span>
<div style="left:0px;top:1691px;width:2858px;height:2px;background:#9b9b9b;"></div>
<div style="left:2566px;top:1652px;width:292px;height:41px;background:#ffffff"></div>
<div style="left:2818px;top:1660px;width:40px;height:33px;background:linear-gradient(135deg,#fffdf2 0%,#f6ecfa 45%,#dff3f6 100%)"></div>
<div style="left:2566px;top:1652px;width:292px;height:1.4px;background:#a9c6ea;"></div>
<svg style="left:2508px;top:1640px" width="76" height="53" viewBox="2508 1640 76 53">
<defs><linearGradient id="sg" x1="0" y1="0" x2="0.3" y2="1"><stop offset="0" stop-color="#f76d33"/><stop offset="1" stop-color="#ee4a10"/></linearGradient></defs>
<path d="M2514.2 1662.5 Q2513 1659.6 2516 1658.6 L2559.6 1645.2 Q2562.9 1644.2 2564 1647.4 L2577.2 1684.6 L2574 1694 L2527.2 1694 Z" fill="url(#sg)"/>
<path d="M2561.5 1659.5 C2549 1658 2527 1662 2523.5 1670.5 C2520.5 1678 2524 1685 2527.5 1693.5 L2553.5 1693.5 C2560 1690 2567 1684 2566.5 1678.5 C2565.5 1672 2548 1671.5 2538.5 1672 C2543 1668 2555 1666.5 2563.5 1666.5 Z" fill="#fff"/>
<path d="M2528 1686 C2536 1688.5 2548 1686.5 2555.5 1682 C2548 1680.5 2536 1681.5 2528 1686 Z" fill="#f2561c"/></svg>
<svg style="left:2588px;top:1664px" width="32" height="29" viewBox="2588 1664 32 29"><rect x="2592" y="1671.3" width="23.2" height="11" rx="1.5" fill="none" stroke="#1470d6" stroke-width="3.6"/><path d="M2603.7 1665.3V1691.8" stroke="#1470d6" stroke-width="3.8" stroke-linecap="round"/></svg>
<svg style="left:2640px;top:1668px" width="26" height="25" viewBox="2640 1668 26 25"><circle cx="2645" cy="1673" r="3" fill="#1470d6"/><path d="M2656.5 1679.5 C2658 1677.5 2662.5 1678 2662.5 1681.5 C2662.5 1685 2660 1688 2656.5 1690 C2658.5 1687 2659 1685 2658 1683.5 C2656.5 1683 2655.5 1681.5 2656.5 1679.5Z" fill="#1470d6"/></svg>
<svg style="left:2686px;top:1661px" width="28" height="32" viewBox="2686 1661 28 32"><rect x="2693" y="1663" width="12.8" height="17" rx="6.4" fill="#1470d6"/><path d="M2689.6 1676.5C2689.6 1691 2709.6 1691 2709.6 1676.5" stroke="#1470d6" stroke-width="2.8" fill="none"/><path d="M2695 1692.3H2704" stroke="#1470d6" stroke-width="2.6"/></svg>
<svg style="left:2732px;top:1664px" width="34" height="29" viewBox="2732 1664 34 29"><rect x="2736" y="1668.4" width="25.4" height="20.4" rx="3" fill="none" stroke="#1470d6" stroke-width="3.2"/><path d="M2736 1677H2761M2744.5 1668.4V1677M2753 1668.4V1677M2742 1683H2756" stroke="#1470d6" stroke-width="2.4" fill="none"/></svg>
<svg style="left:2780px;top:1663px" width="32" height="30" viewBox="2780 1663 32 30"><path d="M2782 1669.5L2790 1665.5C2792.5 1668.5 2798 1668.5 2800.5 1665.5L2808.6 1669.5L2806 1676.5L2803.5 1675.5V1689.5Q2803.5 1691.7 2801.3 1691.7H2789.3Q2787.1 1691.7 2787.1 1689.5V1675.5L2784.6 1676.5Z" fill="#1470d6"/></svg>
<svg style="left:2829px;top:1664px" width="29" height="29" viewBox="2829 1664 29 29"><defs><linearGradient id="gg" x1="0" y1="0" x2="0" y2="1"><stop offset="0" stop-color="#7a70e2"/><stop offset="1" stop-color="#c9627e"/></linearGradient></defs>
<rect x="2831" y="1666" width="11.9" height="30" rx="5" fill="url(#gg)"/><rect x="2845.7" y="1666" width="14" height="13.6" rx="4.5" fill="#5577f5"/><rect x="2845.7" y="1681.4" width="14" height="14" rx="4.5" fill="#6a72e8"/>
<rect x="2829" y="1679.8" width="29" height="1.5" fill="#efe9f6"/><rect x="2848.6" y="1669.6" width="4.4" height="4.4" fill="#fff"/></svg>
<span class="t" style="left:2632.9px;top:1664.49px;font:19.5px/19.5px 'Liberation Sans',sans-serif;color:rgba(104,104,104,0.88);letter-spacing:-1.628px;text-shadow:0 0 1px rgba(255,255,255,0.8);">CSDN @</span>
<svg style="left:2705.7px;top:1664.5px" width="20" height="20" viewBox="0 0 20 20"><path d="M5 2H15V9H5Z M7 12L3 18 M13 12L17 18" stroke="#fff" stroke-width="2.6" fill="none" opacity="0.7"/><path d="M5 2H15V9H5Z M7 12L3 18 M13 12L17 18" stroke="rgba(104,104,104,0.88)" stroke-width="1.35" fill="none"/></svg>
<svg style="left:2725.3px;top:1664.5px" width="20" height="20" viewBox="0 0 20 20"><path d="M2 2H18V18H2Z M5 8H15 M10 5V9L6 15 M10 9L14 15" stroke="#fff" stroke-width="2.6" fill="none" opacity="0.7"/><path d="M2 2H18V18H2Z M5 8H15 M10 5V9L6 15 M10 9L14 15" stroke="rgba(104,104,104,0.88)" stroke-width="1.35" fill="none"/></svg>
<svg style="left:2744.9px;top:1664.5px" width="20" height="20" viewBox="0 0 20 20"><path d="M6 2L8 4 M3 7H15V16C15 18 13 18 12 17 M9 3C9 10 7 15 3 18 M10 10L12 13" stroke="#fff" stroke-width="2.6" fill="none" opacity="0.7"/><path d="M6 2L8 4 M3 7H15V16C15 18 13 18 12 17 M9 3C9 10 7 15 3 18 M10 10L12 13" stroke="rgba(104,104,104,0.88)" stroke-width="1.35" fill="none"/></svg>
<svg style="left:2764.5px;top:1664.5px" width="20" height="20" viewBox="0 0 20 20"><path d="M6 2L2 9 M4.5 6V18 M10 2L7.5 7 M9 5H17L16 7 M13 7V16C13 18 12 18 11 17 M10 10L8 14 M16 10L18 14" stroke="#fff" stroke-width="2.6" fill="none" opacity="0.7"/><path d="M6 2L2 9 M4.5 6V18 M10 2L7.5 7 M9 5H17L16 7 M13 7V16C13 18 12 18 11 17 M10 10L8 14 M16 10L18 14" stroke="rgba(104,104,104,0.88)" stroke-width="1.35" fill="none"/></svg>
<svg style="left:2784.1px;top:1664.5px" width="20" height="20" viewBox="0 0 20 20"><path d="M2 3H18 M10 3L9 7 M3 7H17V18 M3 7V18 M8 7V16 M12.5 7V16" stroke="#fff" stroke-width="2.6" fill="none" opacity="0.7"/><path d="M2 3H18 M10 3L9 7 M3 7H17V18 M3 7V18 M8 7V16 M12.5 7V16" stroke="rgba(104,104,104,0.88)" stroke-width="1.35" fill="none"/></svg>
<svg style="left:2803.7px;top:1664.5px" width="20" height="20" viewBox="0 0 20 20"><path d="M3 3L5 5 M2 8L4 10 M2 17L5 12 M8 2H16V9H8Z M8 5.5H16 M7 12H17V17H7Z M10.3 12V17 M13.6 12V17 M6 18H18" stroke="#fff" stroke-width="2.6" fill="none" opacity="0.7"/><path d="M3 3L5 5 M2 8L4 10 M2 17L5 12 M8 2H16V9H8Z M8 5.5H16 M7 12H17V17H7Z M10.3 12V17 M13.6 12V17 M6 18H18" stroke="rgba(104,104,104,0.88)" stroke-width="1.35" fill="none"/></svg>
<svg style="left:2823.3px;top:1664.5px" width="20" height="20" viewBox="0 0 20 20"><path d="M5 2H14L11 5 M3 6H17L15 8 M10 4V10C10 11 9 11 8 10.5 M14 6L5 10 M2 13H18 M10 11V19 M10 13L3 18 M10 13L17 18" stroke="#fff" stroke-width="2.6" fill="none" opacity="0.7"/><path d="M5 2H14L11 5 M3 6H17L15 8 M10 4V10C10 11 9 11 8 10.5 M14 6L5 10 M2 13H18 M10 11V19 M10 13L3 18 M10 13L17 18" stroke="rgba(104,104,104,0.88)" stroke-width="1.35" fill="none"/></svg>
</div></body></html>
